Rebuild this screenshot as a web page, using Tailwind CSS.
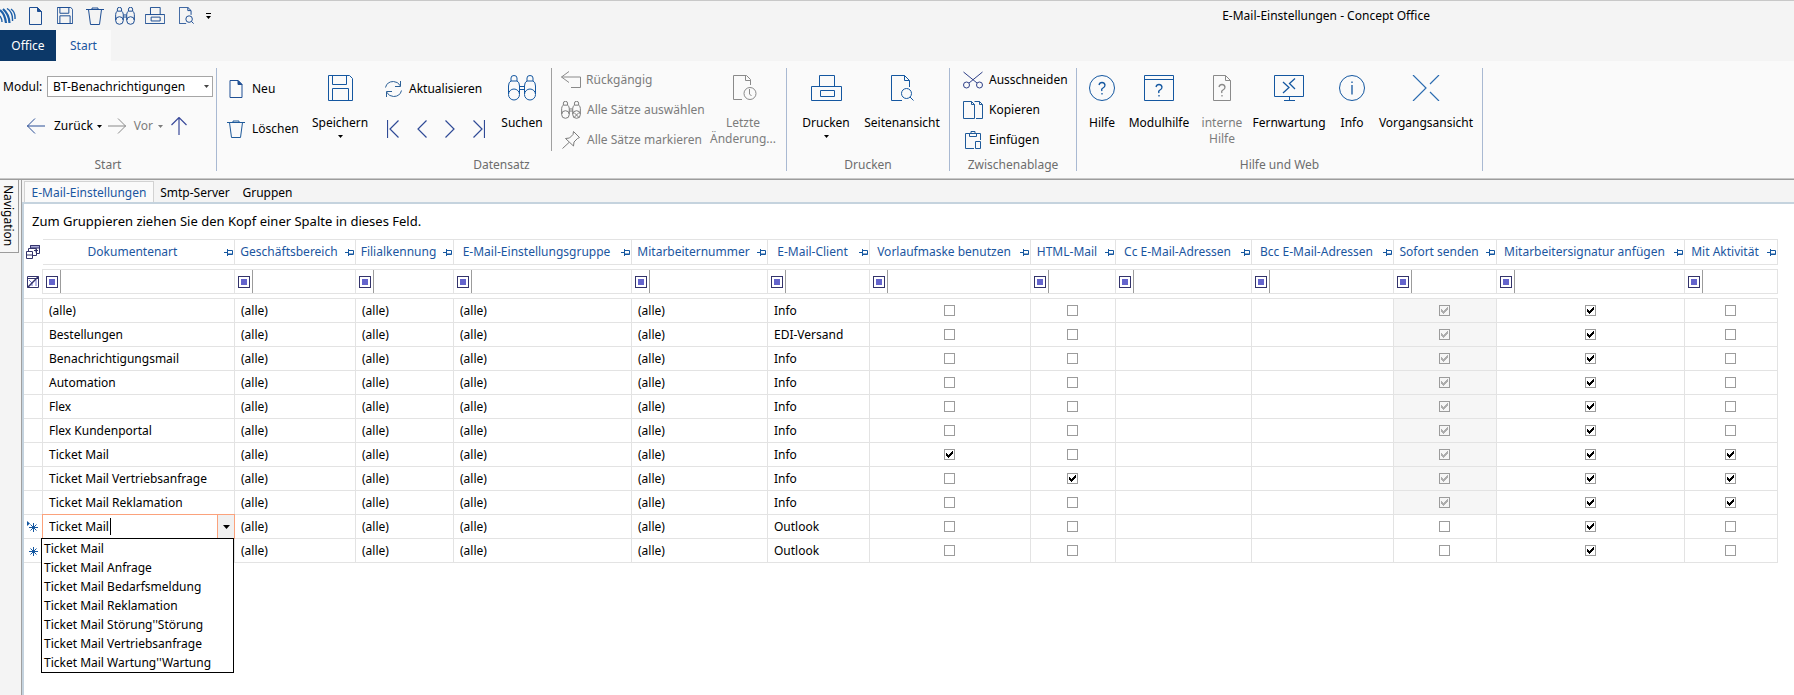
<!DOCTYPE html>
<html lang="de">
<head>
<meta charset="utf-8">
<title>E-Mail-Einstellungen - Concept Office</title>
<script src="https://cdn.jsdelivr.net/npm/@tailwindcss/browser@4"></script>
</head>
<body class="flex min-h-screen flex-col bg-[#f4f4f4] font-['Noto_Sans',sans-serif] text-[12px] leading-4 text-black">

<svg class="hidden" aria-hidden="true">
  <symbol id="page" viewBox="0 0 13 18"><path d="M.5 .5H8.500L12.500 4.500V17.500H.5Z"/><path d="M8.500 .5L12.500 4.500H8.500Z" fill="currentColor"/></symbol>
  <symbol id="floppy" viewBox="0 0 25 26"><path vector-effect="non-scaling-stroke" d="M.5 .5H21.500L24.500 3.500V25.500H.5ZM4.500 .5V9.500H18.500V.5M4.500 25.500V13.500H20.500V25.500"/></symbol>
  <symbol id="trash" viewBox="0 0 18 18"><path d="M0 2.500H18M6 2.500V1H12V2.500M2.500 2.500L4.500 17.500H13.500L15.500 2.500"/></symbol>
  <symbol id="bino" viewBox="0 0 28 26"><circle cx="6" cy="19.500" r="5.500" vector-effect="non-scaling-stroke"/><circle cx="22" cy="19.500" r="5.500" vector-effect="non-scaling-stroke"/><path vector-effect="non-scaling-stroke" d="M.5 19V11Q.5 7 3 6H9Q11.500 7 11.500 11V19M16.500 19V11Q16.500 7 19 6H25Q27.500 7 27.500 11V19M3 6V3Q3 .5 6 .5T9 3V6M19 6V3Q19 .5 22 .5T25 3V6M11.500 11.500H16.500M11.500 14.500H16.500"/></symbol>
  <symbol id="printer" viewBox="0 0 31 26"><path vector-effect="non-scaling-stroke" d="M.5 11.500H30.500V25.500H.5ZM8.500 11.500V.5H23.500V11.500M9.500 15.500H23.500V21.500H9.500Z"/></symbol>
  <symbol id="preview" viewBox="0 0 23 26"><path vector-effect="non-scaling-stroke" d="M11 25.500H.5V.5H13.500L18.500 5.500V12M13.500 .5V5.500H18.500M19 22L22.500 25.500"/><circle vector-effect="non-scaling-stroke" cx="15.500" cy="18.500" r="5"/></symbol>
  <symbol id="arrow" viewBox="0 0 18 16"><path d="M0 8H18M8 .5L.5 8L8 15.500"/></symbol>
  <symbol id="caret" viewBox="0 0 5 3"><path d="M0 0H5L2.500 3Z" fill="currentColor" stroke="none"/></symbol>
  <symbol id="pin" viewBox="0 0 9 7"><path d="M0 3.500H3M3.500 0V7M3.500 1.500H8.500V5.500H3.500M3.500 5H8.500"/></symbol>
  <symbol id="tick" viewBox="0 0 7 7"><path d="M0 2H1V3H2V4H3V3H4V2H5V1H6V0H7V3H6V4H5V5H4V6H3V7H2V6H1V5H0Z" fill="currentColor" stroke="none"/></symbol>
</svg>

<header class="border-t border-[#c8c8c8]">
  <div class="flex h-[29px] items-center">
    <div class="flex flex-1 items-center text-[#1f4f94]">
      <svg class="h-4 w-4" viewBox="0 0 16 16" fill="none" stroke="#1d5fa8"><path d="M0 2Q5 6 6 15M3 1Q9 6 9.500 15" stroke-width="2.200"/><path d="M7 .5Q13 4 12.500 13M11 1Q15.500 4 15 11M0 8Q2 11 2 14" stroke-width="1.400"/></svg>
      <button class="ml-[13px]" aria-label="Neu"><svg class="h-[18px] w-[13px] fill-none stroke-current"><use href="#page"/></svg></button>
      <button class="ml-[15px]" aria-label="Speichern"><svg class="h-[17px] w-4 fill-none stroke-current"><use href="#floppy"/></svg></button>
      <button class="ml-[13px]" aria-label="Löschen"><svg class="h-[18px] w-[18px] fill-none stroke-current"><use href="#trash"/></svg></button>
      <button class="ml-[11px]" aria-label="Suchen"><svg class="h-[18px] w-5 fill-none stroke-current"><use href="#bino"/></svg></button>
      <button class="ml-[10px]" aria-label="Drucken"><svg class="h-[17px] w-5 fill-none stroke-current"><use href="#printer"/></svg></button>
      <button class="ml-[14px]" aria-label="Seitenansicht"><svg class="h-[17px] w-[15px] fill-none stroke-current"><use href="#preview"/></svg></button>
      <button class="ml-3 text-black" aria-label="Symbolleiste anpassen"><svg class="h-[6px] w-[5px]" viewBox="0 0 5 6"><path d="M0 0H5V1H0ZM0 3H5L2.500 6Z" fill="currentColor"/></svg></button>
    </div>
    <h1 class="pr-[364px]">E-Mail-Einstellungen - Concept Office</h1>
  </div>
  <nav class="flex h-[31px]">
    <button class="w-14 bg-[#0c3868] text-white">Office</button>
    <button class="w-[55px] bg-[#fafafa] text-[#1b56a0]">Start</button>
  </nav>
</header>

<section class="flex h-[118px] border-b border-[#c8c8c8] bg-[#fafafa] pt-[7px]" aria-label="Menüband">
  <div class="flex h-[103px] w-[217px] flex-col border-r border-[#a9b9d2]">
    <div class="h-[91px]">
      <div class="flex items-center pt-2 pl-[3px]">
        <label for="modul" class="w-11">Modul:</label>
        <div class="relative w-[166px]">
          <select id="modul" class="h-[21px] w-full appearance-none border border-[#a6a6a6] bg-white pl-[5px]"><option>BT-Benachrichtigungen</option></select>
          <svg class="pointer-events-none absolute top-[9px] right-1 h-[3px] w-[5px] text-[#444]"><use href="#caret"/></svg>
        </div>
      </div>
      <div class="flex items-center pt-5 pl-[27px]">
        <button class="flex items-center"><svg class="mr-[9px] h-4 w-[18px] fill-none stroke-[#2b4f96]"><use href="#arrow"/></svg>Zurück<svg class="ml-1 h-[3px] w-[5px]"><use href="#caret"/></svg></button>
        <button class="ml-[6px] flex items-center text-[#7c7c7c]" disabled><svg class="mr-2 h-4 w-[18px] rotate-180 fill-none stroke-[#8a8a8a]"><use href="#arrow"/></svg>Vor<svg class="ml-[5px] h-[3px] w-[5px]"><use href="#caret"/></svg></button>
        <button class="ml-2" aria-label="Nach oben"><svg class="h-[18px] w-4 fill-none stroke-[#3a4a9a]" viewBox="0 0 16 18"><path d="M8 0V18M.5 8L8 .5L15.500 8" stroke-width="1.200"/></svg></button>
      </div>
    </div>
    <div class="text-center leading-3 text-[#6d6d6d]">Start</div>
  </div>

  <div class="flex h-[103px] w-[570px] flex-col border-r border-[#a9b9d2]">
    <div class="flex h-[91px]">
      <div class="flex w-[87px] flex-col gap-[22px] pt-3 pl-[10px]">
        <button class="flex items-center gap-[7px]"><svg class="h-[18px] w-[18px] fill-none stroke-[#1f4f94] text-[#1f4f94]"><use href="#page"/></svg>Neu</button>
        <button class="flex items-center gap-[7px]"><svg class="h-[18px] w-[18px] fill-none stroke-[#1f5a9a]"><use href="#trash"/></svg>Löschen</button>
      </div>
      <button class="flex w-[72px] flex-col items-center pt-[7px]"><svg class="mb-[14px] h-[26px] w-[25px] shrink-0 fill-none stroke-[#1457a0]"><use href="#floppy"/></svg>Speichern<svg class="mt-1 h-[3px] w-[5px]"><use href="#caret"/></svg></button>
      <div class="flex w-[118px] flex-col gap-[22px] pt-3 pl-[9px]">
        <button class="flex items-center gap-[7px]"><svg class="h-[18px] w-[17px] fill-none stroke-[#2b5f96]" viewBox="0 0 17 18"><path d="M.5 7.500Q2 1.500 8.500 1.500Q13 1.500 15.500 6M15.500 1V6.500H10M16.500 10.500Q15 16.500 8.500 16.500Q4 16.500 1.500 12M1.500 17V11.500H7"/></svg>Aktualisieren</button>
        <div class="flex gap-[18px] pl-[2px] text-[#2f4a96]">
          <button aria-label="Erster"><svg class="h-[18px] w-3 fill-none stroke-current" viewBox="0 0 12 18"><path d="M.5 0V18M11.500 .5L3 9L11.500 17.500" stroke-width="1.200"/></svg></button>
          <button aria-label="Vorheriger"><svg class="h-[18px] w-[10px] fill-none stroke-current" viewBox="0 0 10 18"><path d="M9.500 .5L1 9L9.500 17.500" stroke-width="1.200"/></svg></button>
          <button aria-label="Nächster"><svg class="h-[18px] w-[10px] fill-none stroke-current" viewBox="0 0 10 18"><path d="M.5 .5L9 9L.5 17.500" stroke-width="1.200"/></svg></button>
          <button aria-label="Letzter"><svg class="h-[18px] w-3 fill-none stroke-current" viewBox="0 0 12 18"><path d="M11.500 0V18M.5 .5L9 9L.5 17.500" stroke-width="1.200"/></svg></button>
        </div>
      </div>
      <button class="flex w-[56px] flex-col items-center pt-[7px]"><svg class="mb-[14px] h-[26px] w-7 shrink-0 fill-none stroke-[#1457a0]"><use href="#bino"/></svg>Suchen</button>
      <div class="ml-[1px] flex h-[83px] w-[152px] flex-col gap-3 border-l border-[#a0a0a0] pt-[3px] pl-[9px] whitespace-nowrap text-[#7c7c7c]">
        <button class="flex h-[18px] items-center gap-[5px]" disabled><svg class="h-[18px] w-5 shrink-0 fill-none stroke-[#8a8a8a]" viewBox="0 0 20 18"><path d="M8 .5L.5 6L8 11.500M.5 6H19.500V16.500H10"/></svg>Rückgängig</button>
        <button class="flex h-[18px] items-center gap-[6px]" disabled><svg class="h-[18px] w-5 shrink-0 fill-none stroke-[#7c7c7c]" viewBox="0 0 20 18"><use href="#bino" width="20" height="18"/><path d="M13 11.500L18 16.500M18 11.500L13 16.500"/></svg>Alle Sätze auswählen</button>
        <button class="flex h-[18px] items-center gap-[6px]" disabled><svg class="h-[18px] w-5 shrink-0 fill-none stroke-[#7c7c7c]" viewBox="0 0 20 18"><path d="M12.500 .5L18.500 6.500L16.500 7.500L13 11L12.500 15L4.500 7.500L8.500 7L12 3.500ZM8 11.500L1.500 17.500"/></svg>Alle Sätze markieren</button>
      </div>
      <button class="flex w-[80px] flex-col items-center pt-[7px] text-[#7c7c7c]" disabled><svg class="mb-[14px] ml-1 h-[26px] w-6 shrink-0 fill-none stroke-[#8a8a8a]" viewBox="0 0 24 26"><path d="M9 24.500H.5V.5H13.500L17.500 4.500V10M12.500 .5V5.500H17.500M16.500 14V19L18.500 21"/><circle cx="17" cy="18.500" r="6"/></svg>Letzte<br>Änderung...</button>
    </div>
    <div class="text-center leading-3 text-[#6d6d6d]">Datensatz</div>
  </div>

  <div class="flex h-[103px] w-[163px] flex-col border-r border-[#a9b9d2]">
    <div class="flex h-[91px] pl-2">
      <button class="flex w-[62px] flex-col items-center pt-[7px]"><svg class="mb-[14px] h-[26px] w-[31px] shrink-0 fill-none stroke-[#1457a0]"><use href="#printer"/></svg>Drucken<svg class="mt-1 h-[3px] w-[5px]"><use href="#caret"/></svg></button>
      <button class="flex w-[90px] flex-col items-center pt-[7px]"><svg class="mb-[14px] h-[26px] w-[23px] shrink-0 fill-none stroke-[#1457a0]"><use href="#preview"/></svg>Seitenansicht</button>
    </div>
    <div class="text-center leading-3 text-[#6d6d6d]">Drucken</div>
  </div>

  <div class="flex h-[103px] w-[127px] flex-col border-r border-[#a9b9d2]">
    <div class="flex h-[91px] flex-col gap-3 pt-[3px] pl-[13px]">
      <button class="flex h-[18px] items-center gap-[6px]"><svg class="h-[18px] w-5 fill-none stroke-[#2f4088]" viewBox="0 0 20 18"><path d="M.5 1L14 12M19.500 1L6 12"/><circle cx="3.500" cy="14" r="3"/><circle cx="16.500" cy="14" r="3"/></svg>Ausschneiden</button>
      <button class="flex h-[18px] items-center gap-[6px]"><svg class="h-[18px] w-5 fill-none stroke-[#1f5a9a]" viewBox="0 0 20 18"><path d="M.5 .5H8.500L11.500 3.500V17.500H.5ZM11.500 .5H16.500L19.500 3.500V17.500H13M8.500 .5V3.500H11.500M16.500 .5V3.500H19.500"/></svg>Kopieren</button>
      <button class="flex h-[18px] items-center gap-[6px]"><svg class="h-[18px] w-5 fill-none stroke-[#1f5a9a]" viewBox="0 0 20 18"><path d="M11 17.500H2.500V2.500H17.500V9M6.500 2.500V5.500H13.500V2.500M8 .5H12V2.500H8ZM12.500 10.500H17.500V17.500H12.500Z"/></svg>Einfügen</button>
    </div>
    <div class="text-center leading-3 text-[#6d6d6d]">Zwischenablage</div>
  </div>

  <div class="flex h-[103px] w-[406px] flex-col border-r border-[#a9b9d2]">
    <div class="flex h-[91px]">
      <button class="flex w-[50px] flex-col items-center pt-[7px]"><svg class="mb-[14px] h-[26px] w-[26px] shrink-0 fill-none stroke-[#1457a0]" viewBox="0 0 26 26"><circle cx="13" cy="13" r="12.500"/><path d="M10 10Q10.500 7.500 13 7.500T16 10Q16 12 14 13T13 16M13 18V19.500" stroke-width="1.300"/></svg>Hilfe</button>
      <button class="flex w-[64px] flex-col items-center pt-[7px]"><svg class="mb-[14px] h-[26px] w-[30px] shrink-0 fill-none stroke-[#1457a0]" viewBox="0 0 30 26"><path d="M.5 .5H29.500V25.500H.5ZM.5 4.500H29.500"/><path d="M12 12Q12.500 9.500 15 9.500T18 12Q18 14 16 15T15 18M15 20V21.500" stroke-width="1.300"/></svg>Modulhilfe</button>
      <button class="flex w-[62px] flex-col items-center pt-[7px] text-[#7c7c7c]" disabled><svg class="mb-[14px] h-[26px] w-[18px] shrink-0 fill-none stroke-[#8a8a8a]" viewBox="0 0 18 26"><path d="M.5 .5H12.500L17.500 5.500V25.500H.5ZM12.500 .5V5.500H17.500"/><path d="M6 12Q6.500 9.500 9 9.500T12 12Q12 14 10 15T9 18M9 20V21.500" stroke-width="1.300"/></svg>interne<br>Hilfe</button>
      <button class="flex w-[72px] flex-col items-center pt-[7px]"><svg class="mb-[14px] h-[26px] w-[30px] shrink-0 fill-none stroke-[#1457a0]" viewBox="0 0 30 26"><path d="M.5 .5H29.500V21.500H.5ZM15.500 21.500V25.500M10 25.500H21"/><path d="M9 7L15 12.500L9 18M21 3.500L15.500 8.500L21 14" stroke-width="1.300"/></svg>Fernwartung</button>
      <button class="flex w-[54px] flex-col items-center pt-[7px]"><svg class="mb-[14px] h-[26px] w-[26px] shrink-0 fill-none stroke-[#1457a0]" viewBox="0 0 26 26"><circle cx="13" cy="13" r="12.500"/><path d="M13 10V19.500M13 6.500V8" stroke-width="1.300"/></svg>Info</button>
      <button class="flex w-[94px] flex-col items-center pt-[7px]"><svg class="mb-[14px] h-[26px] w-[28px] shrink-0 fill-none stroke-[#2c6cb0]" viewBox="0 0 28 26"><path d="M1 0L14 13L1 26M27 0L18 9M27 26L18 17" stroke-width="1.200"/></svg>Vorgangsansicht</button>
    </div>
    <div class="text-center leading-3 text-[#6d6d6d]">Hilfe und Web</div>
  </div>
</section>

<main class="flex flex-1 border-t border-[#9c9c9c]">
  <div class="w-[21px] shrink-0">
    <button class="h-[73px] w-[19px] border-r border-b border-[#9c9c9c] bg-[#f7f7f7] pr-[2px] [writing-mode:vertical-rl]">Navigation</button>
  </div>
  <div class="flex min-w-0 flex-1 flex-col border-l border-[#a0a0a0]">
    <div class="flex h-6 border-b-2 border-[#c5d3de] pt-[1px] pl-[2px]">
      <button class="w-[130px] border border-b-0 border-[#d2d2d2] bg-[#fafafa] pt-[2px] text-[#1b56a0]">E-Mail-Einstellungen</button>
      <button class="w-[82px] pt-[2px]">Smtp-Server</button>
      <button class="w-[63px] pt-[2px]">Gruppen</button>
    </div>
    <div class="flex-1 border-l-2 border-[#c5d3de] bg-white pr-4">
      <p class="h-[35px] pt-[9px] pl-2 text-[13px]">Zum Gruppieren ziehen Sie den Kopf einer Spalte in dieses Feld.</p>
      <table class="w-full table-fixed border-separate border-spacing-0">
        <colgroup><col class="w-[19px]"><col class="w-[192px]"><col class="w-[121px]"><col class="w-[98px]"><col class="w-[178px]"><col class="w-[136px]"><col class="w-[102px]"><col class="w-[161px]"><col class="w-[85px]"><col class="w-[136px]"><col class="w-[142px]"><col class="w-[103px]"><col class="w-[188px]"><col class="w-[93px]"></colgroup>
        <thead id="head"></thead>
        <tbody id="rows"></tbody>
      </table>
    </div>
  </div>
</main>

<script>
const columns = ['Dokumentenart','Geschäftsbereich','Filialkennung','E-Mail-Einstellungsgruppe','Mitarbeiternummer','E-Mail-Client','Vorlaufmaske benutzen','HTML-Mail','Cc E-Mail-Adressen','Bcc E-Mail-Adressen','Sofort senden','Mitarbeitersignatur anfügen','Mit Aktivität'];
const chooser = '<button class="block pl-[2px]" aria-label="Spaltenauswahl"><svg class="h-[14px] w-[14px]" viewBox="0 0 14 14" fill="#fff" stroke="#33336b"><path d="M4.500 .5H13.500V8.500H4.500Z"/><path d="M4.500 .5H13.500V3H4.500Z" fill="#a9a9d8"/><path d="M2.500 3.500H10.500V10.500H2.500Z"/><path d="M.5 6.500H6.500V13.500H.5ZM.5 10H6.500M8 5.500H12M10 3.500V7.500"/></svg></button>';
const clear = '<button class="block pl-[3px]" aria-label="Filter löschen"><svg class="h-3 w-3" viewBox="0 0 12 12" fill="none" stroke="#33336b"><path d="M.5 .5H11.500V11.500H.5ZM.5 2.500H11.500"/><path d="M2 4L5 7V10M9 4V10" stroke="#7070d0"/><path d="M.5 11.500L11.500 .5" stroke-width="1.500"/></svg></button>';
document.getElementById('head').innerHTML =
  '<tr class="h-[26px]"><td class="p-0">' + chooser + '</td>' + columns.map(c =>
    `<th scope="col" class="border-y border-r border-[#e3e3e3] p-0 font-normal text-[#1b56a0]"><div class="flex items-center pr-[1px] pl-[2px]"><span class="flex-1 text-center whitespace-nowrap">${c}</span><button class="ml-1" aria-label="${c} fixieren"><svg class="h-[7px] w-[9px] fill-none stroke-[#1457a0]"><use href="#pin"/></svg></button></div></th>`).join('') + '</tr>' +
  '<tr class="h-1"></tr>' +
  '<tr class="h-[25px]"><td class="border-r border-[#e3e3e3] p-0">' + clear + '</td>' + columns.map(c =>
    `<td class="border-y border-r border-[#e3e3e3] p-0"><div class="flex h-[23px] items-center pl-[3px]"><button class="grid h-3 w-3 shrink-0 place-items-center border border-[#33336b] bg-white" aria-label="Operator ${c}"><span class="h-[6px] w-[6px] bg-[#6464cc]"></span></button><input class="ml-[2px] h-full min-w-0 flex-1 border-l border-[#9c9c9c] px-1 outline-none" aria-label="Filter ${c}"></div></td>`).join('') + '</tr>' +
  '<tr class="h-1"></tr>';

/* name, client, then the five tick columns: maske, html, sofort, signatur, aktivität */
const data = [
  ['(alle)','Info',0,0,2,1,0], ['Bestellungen','EDI-Versand',0,0,2,1,0], ['Benachrichtigungsmail','Info',0,0,2,1,0],
  ['Automation','Info',0,0,2,1,0], ['Flex','Info',0,0,2,1,0], ['Flex Kundenportal','Info',0,0,2,1,0],
  ['Ticket Mail','Info',1,0,2,1,1], ['Ticket Mail Vertriebsanfrage','Info',0,1,2,1,1], ['Ticket Mail Reklamation','Info',0,0,2,1,1],
  ['Ticket Mail','Outlook',0,0,0,1,0], ['','Outlook',0,0,0,1,0]
];
const options = ['Ticket Mail','Ticket Mail Anfrage','Ticket Mail Bedarfsmeldung','Ticket Mail Reklamation',"Ticket Mail Störung''Störung",'Ticket Mail Vertriebsanfrage',"Ticket Mail Wartung''Wartung"];
const top0 = i => i === 0 ? 'border-t' : '';
const text = (t, i) => `<td class="border-r border-b border-[#e3e3e3] py-0 pr-0 pl-[6px] whitespace-nowrap ${top0(i)}">${t}</td>`;
const check = (v, i, label) => `<td class="border-r border-b border-[#e3e3e3] p-0 pr-[1px] ${top0(i)} ${v === 2 ? 'bg-[#f6f6f6]' : ''}"><div class="relative mx-auto h-[11px] w-[11px]"><input type="checkbox" aria-label="${label}" class="peer block h-[11px] w-[11px] appearance-none border border-[#9c9c9c]" ${v ? 'checked' : ''} ${v === 2 ? 'disabled' : ''}><svg class="pointer-events-none absolute top-[2px] left-[2px] hidden h-[7px] w-[7px] peer-checked:block ${v === 2 ? 'text-[#adadad]' : 'text-black'}"><use href="#tick"/></svg></div></td>`;
const combo = `<td class="relative border-r border-b border-[#e3e3e3] p-0">
  <div class="absolute -top-px -left-px flex h-[25px] w-[193px] border border-[#fba27c] bg-white">
    <input class="min-w-0 flex-1 pl-[6px] outline-none" value="Ticket Mail" role="combobox" aria-expanded="true" aria-controls="choices" aria-label="Dokumentenart">
    <span class="absolute top-[3px] left-[67px] h-[17px] w-px bg-black"></span>
    <button class="grid w-[17px] place-items-center border-l border-[#fba27c] bg-[#f0f0f0]" aria-label="Auswahl öffnen"><svg class="h-1 w-[7px]" viewBox="0 0 7 4"><path d="M0 0H7L3.500 4Z"/></svg></button>
  </div>
  <ul id="choices" role="listbox" class="absolute top-[23px] -left-[2px] z-10 w-[193px] border border-black bg-white">${options.map(o => `<li role="option" class="h-[19px] pl-[2px] leading-[19px] whitespace-nowrap">${o}</li>`).join('')}</ul></td>`;
const mark = i => i < 9 ? '' : `<svg class="ml-[3px] h-[12px] w-3 fill-none stroke-[#1457a0]" viewBox="0 0 12 12">${i === 9 ? '<path d="M0 0L3 2.500L0 5Z" fill="#1457a0" stroke="none"/>' : ''}<path d="M6.500 2V11M2 6.500H11M3.500 3.500L9.500 9.500M9.500 3.500L3.500 9.500"/></svg>`;
document.getElementById('rows').innerHTML = data.map((r, i) =>
  `<tr class="${i === 0 ? 'h-[25px]' : 'h-6'}"><td class="border-r border-b border-[#e3e3e3] p-0 ${top0(i)}">${mark(i)}</td>` +
  (i === 9 ? combo : text(r[0], i)) + text('(alle)', i).repeat(4) + text(r[1], i) +
  check(r[2], i, columns[6]) + check(r[3], i, columns[7]) + text('', i) + text('', i) +
  check(r[4], i, columns[10]) + check(r[5], i, columns[11]) + check(r[6], i, columns[12]) + '</tr>').join('');
</script>
</body>
</html>
